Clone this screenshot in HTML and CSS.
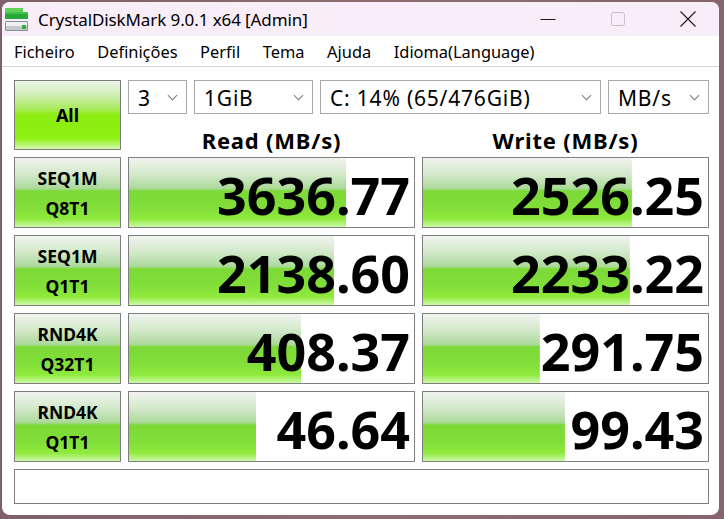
FILE: index.html
```html
<!DOCTYPE html>
<html>
<head>
<meta charset="utf-8">
<link rel="stylesheet" href="styles.css">
</head>
<body>
<div class="window">
  <div class="titlebar">
    <svg class="appicon" width="24" height="24" viewBox="0 0 24 24">
      <rect x="0" y="0" width="18" height="5" fill="#5fd05a"/>
      <rect x="0" y="4" width="23" height="7" fill="#27a83a"/>
      <rect x="0" y="4" width="23" height="2" fill="#45c24a"/>
      <rect x="0" y="13" width="23" height="10" rx="1" fill="#8a8f93"/>
      <rect x="1" y="14" width="21" height="4" fill="#eef0f1"/>
      <rect x="1" y="18" width="21" height="4" fill="#c5c9cc"/>
      <rect x="17" y="17" width="4" height="4" fill="#2bb33c"/>
    </svg>
    <span class="title">CrystalDiskMark 9.0.1 x64 [Admin]</span>
    <div class="controls">
      <svg class="ctl" width="16" height="16" viewBox="0 0 16 16"><path d="M0.5 8.5 H15.5" stroke="#1a1a1a" stroke-width="1"/></svg>
      <svg class="ctl" width="16" height="16" viewBox="0 0 16 16"><rect x="1.5" y="1.5" width="13" height="13" rx="2" fill="none" stroke="#c4c0c4" stroke-width="1"/></svg>
      <svg class="ctl" width="16" height="16" viewBox="0 0 16 16"><path d="M0.5 0.5 L15.5 15.5 M15.5 0.5 L0.5 15.5" stroke="#1a1a1a" stroke-width="1.1"/></svg>
    </div>
  </div>
  <div class="menubar">
    <span>Ficheiro</span>
    <span>Definições</span>
    <span>Perfil</span>
    <span>Tema</span>
    <span>Ajuda</span>
    <span>Idioma(Language)</span>
  </div>
  <div class="content">
    <div class="allbtn">All</div>
    <div class="combos">
      <div class="combo c1"><span>3</span><i class="chev"></i></div>
      <div class="combo c2"><span>1GiB</span><i class="chev"></i></div>
      <div class="combo c3"><span>C: 14% (65/476GiB)</span><i class="chev"></i></div>
      <div class="combo c4"><span>MB/s</span><i class="chev"></i></div>
    </div>
    <div class="head">Read (MB/s)</div>
    <div class="head">Write (MB/s)</div>

    <div class="label"><span>SEQ1M</span><span>Q8T1</span></div>
    <div class="cell" style="--w:76.3%">3636.77</div>
    <div class="cell" style="--w:73.3%">2526.25</div>

    <div class="label"><span>SEQ1M</span><span>Q1T1</span></div>
    <div class="cell" style="--w:72%">2138.60</div>
    <div class="cell" style="--w:72.6%">2233.22</div>

    <div class="label"><span>RND4K</span><span>Q32T1</span></div>
    <div class="cell" style="--w:60.4%">408.37</div>
    <div class="cell" style="--w:41%">291.75</div>

    <div class="label"><span>RND4K</span><span>Q1T1</span></div>
    <div class="cell" style="--w:44.6%">46.64</div>
    <div class="cell" style="--w:49.8%">99.43</div>

    <div class="comment"></div>
  </div>
</div>
</body>
</html>
```
FILE: styles.css
```css
html, body {
  margin: 0;
  padding: 0;
}
body {
  width: 724px;
  height: 519px;
  overflow: hidden;
  background: linear-gradient(90deg, #7f5f6a 0%, #8e6c72 50%, #86646d 100%);
  font-family: "Noto Sans", "DejaVu Sans", sans-serif;
  color: #000;
}
.window {
  margin: 2px 0 0 2px;
  width: 717px;
  height: 513px;
  border-radius: 8px;
  overflow: hidden;
  background: #ffffff;
  display: flex;
  flex-direction: column;
}
.titlebar {
  height: 34px;
  flex: none;
  background: #f9eef8;
  display: flex;
  align-items: center;
}
.appicon {
  margin-left: 3px;
  margin-top: 1px;
  flex: none;
}
.title {
  margin-left: 9px;
  font-size: 17px;
  letter-spacing: -0.1px;
}
.controls {
  margin-left: auto;
  display: flex;
  align-items: center;
  gap: 54px;
  padding-right: 23px;
}
.ctl {
  display: block;
}
.menubar {
  height: 31px;
  flex: none;
  box-sizing: border-box;
  border-bottom: 1px solid #d6d6d6;
  display: flex;
  align-items: center;
  padding-left: 12px;
  gap: 22.6px;
  font-size: 16.4px;
  letter-spacing: 0;
}
.content {
  flex: 1;
  padding: 13px 0 0 12px;
  display: grid;
  grid-template-columns: 107px 287px 287px;
  grid-template-rows: 34px 29px 71px 71px 71px 71px 35px;
  column-gap: 7px;
  row-gap: 7px;
  align-content: start;
}
.allbtn {
  grid-column: 1;
  grid-row: 1 / span 2;
  box-sizing: border-box;
  border: 1px solid #7b7b7b;
  background: linear-gradient(to bottom, #eef6ea 0%, #cdeeb0 22%, #a6ea58 42%, #8cee10 50%, #8ef012 84%, #d4f9b0 100%);
  display: flex;
  align-items: center;
  justify-content: center;
  font-weight: 700;
  font-size: 18px;
}
.combos {
  grid-column: 2 / span 2;
  grid-row: 1;
  display: flex;
  gap: 7px;
}
.combo {
  box-sizing: border-box;
  height: 34px;
  border: 1px solid #a8a8a8;
  background: #fff;
  display: flex;
  align-items: center;
  padding-left: 9px;
  padding-top: 1px;
  font-size: 21px;
  letter-spacing: 0.8px;
}
.c1 { width: 59px; }
.c2 { width: 119px; }
.c3 { width: 281px; }
.c4 { width: 101px; }
.chev {
  margin-left: auto;
  margin-right: 10px;
  width: 6px;
  height: 6px;
  border-right: 1px solid #7a7a7a;
  border-bottom: 1px solid #7a7a7a;
  transform: rotate(45deg);
  margin-top: -5px;
}
.head {
  grid-row: 2;
  font-weight: 700;
  font-size: 22px;
  letter-spacing: 0.8px;
  text-align: center;
  line-height: 29px;
  padding-top: 5px;
}
.label {
  box-sizing: border-box;
  border: 1px solid #7f7f7f;
  background: linear-gradient(to bottom, #f1f4ef 0%, #d2e8c9 24%, #acd99b 44%, #7cd936 48%, #82df3a 72%, #8fea3c 88%, #cdf7a8 100%);
  display: flex;
  flex-direction: column;
  align-items: center;
  justify-content: center;
  font-weight: 700;
  font-size: 17.5px;
  line-height: 30px;
}
.cell {
  box-sizing: border-box;
  border: 1px solid #7f7f7f;
  background-color: #fff;
  background-image: linear-gradient(to bottom, #f1f4ef 0%, #d2e8c9 24%, #acd99b 44%, #7cd936 48%, #82df3a 72%, #8fea3c 88%, #cdf7a8 100%);
  background-size: var(--w) 100%;
  background-repeat: no-repeat;
  display: flex;
  align-items: center;
  justify-content: flex-end;
  padding-right: 4px;
  padding-top: 4px;
  font-weight: 700;
  font-size: 52px;
  letter-spacing: 0;
}
.comment {
  grid-column: 1 / span 3;
  box-sizing: border-box;
  border: 1px solid #7f7f7f;
  background: #fff;
}
```
